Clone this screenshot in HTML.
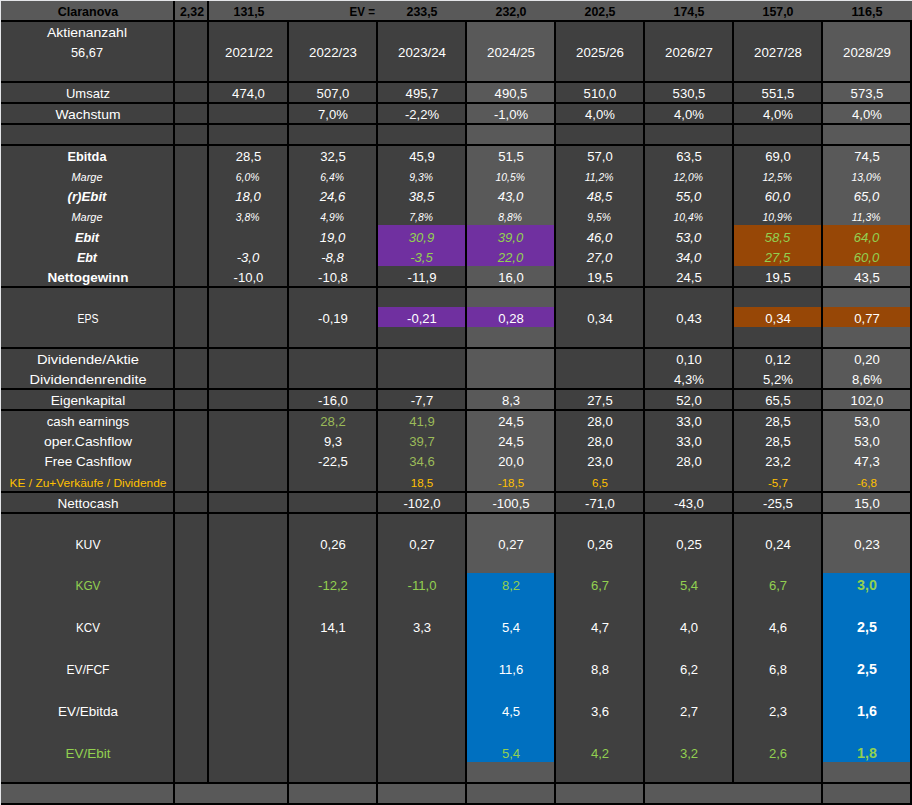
<!DOCTYPE html>
<html><head><meta charset="utf-8"><title>Claranova</title><style>
html,body{margin:0;padding:0}
body{width:912px;height:805px;overflow:hidden;background:#404040;position:relative;font-family:"Liberation Sans",sans-serif}
.r{position:absolute}
.t{position:absolute;width:200px;text-align:center;color:#fff;font-size:13.1px;line-height:20px;height:20px;margin-top:-13.6px;white-space:nowrap}
.b{font-weight:bold}.i{font-style:italic}.k{color:#000}
.s{font-size:10.4px;margin-top:-13.1px}
.B{font-size:14.3px;margin-top:-14.9px}
.y{font-size:11.6px;margin-top:-13.3px}
</style></head><body>
<div class="r" style="left:0px;top:0px;width:912px;height:1px;background:#e4e5e8"></div>
<div class="r" style="left:1px;top:1px;width:911px;height:19px;background:#595959"></div>
<div class="r" style="left:467px;top:22px;width:87px;height:760px;background:#595959"></div>
<div class="r" style="left:823px;top:22px;width:87px;height:760px;background:#595959"></div>
<div class="r" style="left:1px;top:784px;width:911px;height:19px;background:#595959"></div>
<div class="r" style="left:378px;top:225px;width:87px;height:41px;background:#7030a0"></div>
<div class="r" style="left:378px;top:307px;width:87px;height:20px;background:#7030a0"></div>
<div class="r" style="left:467px;top:225px;width:87px;height:41px;background:#7030a0"></div>
<div class="r" style="left:467px;top:307px;width:87px;height:20px;background:#7030a0"></div>
<div class="r" style="left:734px;top:225px;width:87px;height:41px;background:#974706"></div>
<div class="r" style="left:734px;top:307px;width:87px;height:20px;background:#974706"></div>
<div class="r" style="left:823px;top:225px;width:87px;height:41px;background:#974706"></div>
<div class="r" style="left:823px;top:307px;width:87px;height:20px;background:#974706"></div>
<div class="r" style="left:467px;top:573px;width:87px;height:189px;background:#0070c0"></div>
<div class="r" style="left:823px;top:573px;width:87px;height:189px;background:#0070c0"></div>
<div class="r" style="left:1px;top:20px;width:911px;height:2px;background:#000"></div>
<div class="r" style="left:1px;top:81px;width:911px;height:2px;background:#000"></div>
<div class="r" style="left:1px;top:102px;width:911px;height:2px;background:#000"></div>
<div class="r" style="left:1px;top:123px;width:911px;height:2px;background:#000"></div>
<div class="r" style="left:1px;top:144px;width:911px;height:2px;background:#000"></div>
<div class="r" style="left:1px;top:286px;width:911px;height:2px;background:#000"></div>
<div class="r" style="left:1px;top:347px;width:911px;height:2px;background:#000"></div>
<div class="r" style="left:1px;top:388px;width:911px;height:2px;background:#000"></div>
<div class="r" style="left:1px;top:409px;width:911px;height:2px;background:#000"></div>
<div class="r" style="left:1px;top:491px;width:911px;height:2px;background:#000"></div>
<div class="r" style="left:1px;top:512px;width:911px;height:2px;background:#000"></div>
<div class="r" style="left:1px;top:782px;width:911px;height:2px;background:#000"></div>
<div class="r" style="left:1px;top:803px;width:911px;height:2px;background:#000"></div>
<div class="r" style="left:173px;top:1px;width:2px;height:804px;background:#000"></div>
<div class="r" style="left:207px;top:1px;width:2px;height:782px;background:#000"></div>
<div class="r" style="left:287px;top:20px;width:2px;height:785px;background:#000"></div>
<div class="r" style="left:376px;top:20px;width:2px;height:785px;background:#000"></div>
<div class="r" style="left:465px;top:20px;width:2px;height:785px;background:#000"></div>
<div class="r" style="left:554px;top:20px;width:2px;height:785px;background:#000"></div>
<div class="r" style="left:643px;top:20px;width:2px;height:785px;background:#000"></div>
<div class="r" style="left:732px;top:20px;width:2px;height:763px;background:#000"></div>
<div class="r" style="left:821px;top:20px;width:2px;height:785px;background:#000"></div>
<div class="r" style="left:910px;top:20px;width:2px;height:785px;background:#000"></div>
<div class="r" style="left:0px;top:0px;width:1px;height:805px;background:#e6e7ea"></div>
<div class="t b k" style="transform:scaleX(0.9553);left:-12.50px;top:15.70px"><span>Claranova</span></div>
<div class="t b k" style="transform:scaleX(0.9418);left:91.50px;top:15.70px"><span>2,32</span></div>
<div class="t b k" style="transform:scaleX(0.9457);left:148.70px;top:15.70px"><span>131,5</span></div>
<div class="t b k" style="transform:scaleX(0.9457);left:322.20px;top:15.70px"><span>233,5</span></div>
<div class="t b k" style="transform:scaleX(0.9457);left:411.20px;top:15.70px"><span>232,0</span></div>
<div class="t b k" style="transform:scaleX(0.9457);left:500.20px;top:15.70px"><span>202,5</span></div>
<div class="t b k" style="transform:scaleX(0.9457);left:589.20px;top:15.70px"><span>174,5</span></div>
<div class="t b k" style="transform:scaleX(0.9457);left:678.20px;top:15.70px"><span>157,0</span></div>
<div class="t b k" style="transform:scaleX(0.9673);left:767.20px;top:15.70px"><span>116,5</span></div>
<div class="t b k" style="text-align:right;transform:scaleX(0.8865);transform-origin:100% 50%;left:175.00px;top:15.70px"><span>EV =</span></div>
<div class="t " style="transform:scaleX(1.0669);left:-13.00px;top:37.00px"><span>Aktienanzahl</span></div>
<div class="t " style="transform:scaleX(0.9762);left:-13.00px;top:57.00px"><span>56,67</span></div>
<div class="t " style="transform:scaleX(1.0139);left:148.50px;top:57.00px"><span>2021/22</span></div>
<div class="t " style="transform:scaleX(1.0139);left:233.00px;top:57.00px"><span>2022/23</span></div>
<div class="t " style="transform:scaleX(1.0139);left:322.00px;top:57.00px"><span>2023/24</span></div>
<div class="t " style="transform:scaleX(1.0139);left:411.00px;top:57.00px"><span>2024/25</span></div>
<div class="t " style="transform:scaleX(1.0139);left:500.00px;top:57.00px"><span>2025/26</span></div>
<div class="t " style="transform:scaleX(1.0139);left:589.00px;top:57.00px"><span>2026/27</span></div>
<div class="t " style="transform:scaleX(1.0139);left:678.00px;top:57.00px"><span>2027/28</span></div>
<div class="t " style="transform:scaleX(1.0139);left:767.00px;top:57.00px"><span>2028/29</span></div>
<div class="t " style="transform:scaleX(0.9912);left:-12.50px;top:98.00px"><span>Umsatz</span></div>
<div class="t " style="left:148.50px;top:98.00px"><span>474,0</span></div>
<div class="t " style="left:233.00px;top:98.00px"><span>507,0</span></div>
<div class="t " style="left:322.00px;top:98.00px"><span>495,7</span></div>
<div class="t " style="left:411.00px;top:98.00px"><span>490,5</span></div>
<div class="t " style="left:500.00px;top:98.00px"><span>510,0</span></div>
<div class="t " style="left:589.00px;top:98.00px"><span>530,5</span></div>
<div class="t " style="left:678.00px;top:98.00px"><span>551,5</span></div>
<div class="t " style="left:767.00px;top:98.00px"><span>573,5</span></div>
<div class="t " style="transform:scaleX(1.0593);left:-12.50px;top:119.00px"><span>Wachstum</span></div>
<div class="t " style="left:233.00px;top:119.00px"><span>7,0%</span></div>
<div class="t " style="left:322.00px;top:119.00px"><span>-2,2%</span></div>
<div class="t " style="left:411.00px;top:119.00px"><span>-1,0%</span></div>
<div class="t " style="left:500.00px;top:119.00px"><span>4,0%</span></div>
<div class="t " style="left:589.00px;top:119.00px"><span>4,0%</span></div>
<div class="t " style="left:678.00px;top:119.00px"><span>4,0%</span></div>
<div class="t " style="left:767.00px;top:119.00px"><span>4,0%</span></div>
<div class="t b" style="transform:scaleX(0.9746);left:-13.50px;top:161.00px"><span>Ebitda</span></div>
<div class="t " style="left:148.50px;top:161.00px"><span>28,5</span></div>
<div class="t " style="left:233.00px;top:161.00px"><span>32,5</span></div>
<div class="t " style="left:322.00px;top:161.00px"><span>45,9</span></div>
<div class="t " style="left:411.00px;top:161.00px"><span>51,5</span></div>
<div class="t " style="left:500.00px;top:161.00px"><span>57,0</span></div>
<div class="t " style="left:589.00px;top:161.00px"><span>63,5</span></div>
<div class="t " style="left:678.00px;top:161.00px"><span>69,0</span></div>
<div class="t " style="left:767.00px;top:161.00px"><span>74,5</span></div>
<div class="t i s" style="transform:scaleX(1.0525);left:-13.50px;top:180.60px"><span>Marge</span></div>
<div class="t i s" style="left:147.70px;top:180.60px"><span>6,0%</span></div>
<div class="t i s" style="left:232.20px;top:180.60px"><span>6,4%</span></div>
<div class="t i s" style="left:321.20px;top:180.60px"><span>9,3%</span></div>
<div class="t i s" style="left:410.20px;top:180.60px"><span>10,5%</span></div>
<div class="t i s" style="left:499.20px;top:180.60px"><span>11,2%</span></div>
<div class="t i s" style="left:588.20px;top:180.60px"><span>12,0%</span></div>
<div class="t i s" style="left:677.20px;top:180.60px"><span>12,5%</span></div>
<div class="t i s" style="left:766.20px;top:180.60px"><span>13,0%</span></div>
<div class="t b i" style="transform:scaleX(1.0118);left:-13.50px;top:201.00px"><span>(r)Ebit</span></div>
<div class="t i" style="left:148.00px;top:201.00px"><span>18,0</span></div>
<div class="t i" style="left:232.50px;top:201.00px"><span>24,6</span></div>
<div class="t i" style="left:321.50px;top:201.00px"><span>38,5</span></div>
<div class="t i" style="left:410.50px;top:201.00px"><span>43,0</span></div>
<div class="t i" style="left:499.50px;top:201.00px"><span>48,5</span></div>
<div class="t i" style="left:588.50px;top:201.00px"><span>55,0</span></div>
<div class="t i" style="left:677.50px;top:201.00px"><span>60,0</span></div>
<div class="t i" style="left:766.50px;top:201.00px"><span>65,0</span></div>
<div class="t i s" style="transform:scaleX(1.0525);left:-13.50px;top:220.60px"><span>Marge</span></div>
<div class="t i s" style="left:147.70px;top:220.60px"><span>3,8%</span></div>
<div class="t i s" style="left:232.20px;top:220.60px"><span>4,9%</span></div>
<div class="t i s" style="left:321.20px;top:220.60px"><span>7,8%</span></div>
<div class="t i s" style="left:410.20px;top:220.60px"><span>8,8%</span></div>
<div class="t i s" style="left:499.20px;top:220.60px"><span>9,5%</span></div>
<div class="t i s" style="left:588.20px;top:220.60px"><span>10,4%</span></div>
<div class="t i s" style="left:677.20px;top:220.60px"><span>10,9%</span></div>
<div class="t i s" style="left:766.20px;top:220.60px"><span>11,3%</span></div>
<div class="t b i" style="transform:scaleX(0.9703);left:-13.50px;top:241.50px"><span>Ebit</span></div>
<div class="t i" style="left:232.50px;top:241.50px"><span>19,0</span></div>
<div class="t i" style="color:#92d050;left:321.50px;top:241.50px"><span>30,9</span></div>
<div class="t i" style="color:#92d050;left:410.50px;top:241.50px"><span>39,0</span></div>
<div class="t i" style="left:499.50px;top:241.50px"><span>46,0</span></div>
<div class="t i" style="left:588.50px;top:241.50px"><span>53,0</span></div>
<div class="t i" style="color:#92d050;left:677.50px;top:241.50px"><span>58,5</span></div>
<div class="t i" style="color:#92d050;left:766.50px;top:241.50px"><span>64,0</span></div>
<div class="t b i" style="transform:scaleX(0.9481);left:-13.50px;top:261.50px"><span>Ebt</span></div>
<div class="t i" style="left:148.00px;top:261.50px"><span>-3,0</span></div>
<div class="t i" style="left:232.50px;top:261.50px"><span>-8,8</span></div>
<div class="t i" style="color:#92d050;left:321.50px;top:261.50px"><span>-3,5</span></div>
<div class="t i" style="color:#92d050;left:410.50px;top:261.50px"><span>22,0</span></div>
<div class="t i" style="left:499.50px;top:261.50px"><span>27,0</span></div>
<div class="t i" style="left:588.50px;top:261.50px"><span>34,0</span></div>
<div class="t i" style="color:#92d050;left:677.50px;top:261.50px"><span>27,5</span></div>
<div class="t i" style="color:#92d050;left:766.50px;top:261.50px"><span>60,0</span></div>
<div class="t b" style="transform:scaleX(1.0310);left:-12.00px;top:281.70px"><span>Nettogewinn</span></div>
<div class="t " style="left:148.50px;top:281.70px"><span>-10,0</span></div>
<div class="t " style="left:233.00px;top:281.70px"><span>-10,8</span></div>
<div class="t " style="left:322.00px;top:281.70px"><span>-11,9</span></div>
<div class="t " style="left:411.00px;top:281.70px"><span>16,0</span></div>
<div class="t " style="left:500.00px;top:281.70px"><span>19,5</span></div>
<div class="t " style="left:589.00px;top:281.70px"><span>24,5</span></div>
<div class="t " style="left:678.00px;top:281.70px"><span>19,5</span></div>
<div class="t " style="left:767.00px;top:281.70px"><span>43,5</span></div>
<div class="t " style="transform:scaleX(0.8014);left:-12.50px;top:322.40px"><span>EPS</span></div>
<div class="t " style="left:233.00px;top:322.40px"><span>-0,19</span></div>
<div class="t " style="left:322.00px;top:322.40px"><span>-0,21</span></div>
<div class="t " style="left:411.00px;top:322.40px"><span>0,28</span></div>
<div class="t " style="left:500.00px;top:322.40px"><span>0,34</span></div>
<div class="t " style="left:589.00px;top:322.40px"><span>0,43</span></div>
<div class="t " style="left:678.00px;top:322.40px"><span>0,34</span></div>
<div class="t " style="left:767.00px;top:322.40px"><span>0,77</span></div>
<div class="t " style="transform:scaleX(1.1211);left:-12.50px;top:363.70px"><span>Dividende/Aktie</span></div>
<div class="t " style="left:589.00px;top:363.70px"><span>0,10</span></div>
<div class="t " style="left:678.00px;top:363.70px"><span>0,12</span></div>
<div class="t " style="left:767.00px;top:363.70px"><span>0,20</span></div>
<div class="t " style="transform:scaleX(1.1083);left:-12.50px;top:383.70px"><span>Dividendenrendite</span></div>
<div class="t " style="left:589.00px;top:383.70px"><span>4,3%</span></div>
<div class="t " style="left:678.00px;top:383.70px"><span>5,2%</span></div>
<div class="t " style="left:767.00px;top:383.70px"><span>8,6%</span></div>
<div class="t " style="transform:scaleX(1.0442);left:-12.50px;top:404.50px"><span>Eigenkapital</span></div>
<div class="t " style="left:233.00px;top:404.50px"><span>-16,0</span></div>
<div class="t " style="left:322.00px;top:404.50px"><span>-7,7</span></div>
<div class="t " style="left:411.00px;top:404.50px"><span>8,3</span></div>
<div class="t " style="left:500.00px;top:404.50px"><span>27,5</span></div>
<div class="t " style="left:589.00px;top:404.50px"><span>52,0</span></div>
<div class="t " style="left:678.00px;top:404.50px"><span>65,5</span></div>
<div class="t " style="left:767.00px;top:404.50px"><span>102,0</span></div>
<div class="t " style="transform:scaleX(1.0119);left:-12.50px;top:425.50px"><span>cash earnings</span></div>
<div class="t " style="color:#9bbb59;left:233.00px;top:425.50px"><span>28,2</span></div>
<div class="t " style="color:#9bbb59;left:322.00px;top:425.50px"><span>41,9</span></div>
<div class="t " style="left:411.00px;top:425.50px"><span>24,5</span></div>
<div class="t " style="left:500.00px;top:425.50px"><span>28,0</span></div>
<div class="t " style="left:589.00px;top:425.50px"><span>33,0</span></div>
<div class="t " style="left:678.00px;top:425.50px"><span>28,5</span></div>
<div class="t " style="left:767.00px;top:425.50px"><span>53,0</span></div>
<div class="t " style="transform:scaleX(1.0604);left:-12.50px;top:445.50px"><span>oper.Cashflow</span></div>
<div class="t " style="left:233.00px;top:445.50px"><span>9,3</span></div>
<div class="t " style="color:#9bbb59;left:322.00px;top:445.50px"><span>39,7</span></div>
<div class="t " style="left:411.00px;top:445.50px"><span>24,5</span></div>
<div class="t " style="left:500.00px;top:445.50px"><span>28,0</span></div>
<div class="t " style="left:589.00px;top:445.50px"><span>33,0</span></div>
<div class="t " style="left:678.00px;top:445.50px"><span>28,5</span></div>
<div class="t " style="left:767.00px;top:445.50px"><span>53,0</span></div>
<div class="t " style="transform:scaleX(1.0305);left:-12.50px;top:465.50px"><span>Free Cashflow</span></div>
<div class="t " style="left:233.00px;top:465.50px"><span>-22,5</span></div>
<div class="t " style="color:#9bbb59;left:322.00px;top:465.50px"><span>34,6</span></div>
<div class="t " style="left:411.00px;top:465.50px"><span>20,0</span></div>
<div class="t " style="left:500.00px;top:465.50px"><span>23,0</span></div>
<div class="t " style="left:589.00px;top:465.50px"><span>28,0</span></div>
<div class="t " style="left:678.00px;top:465.50px"><span>23,2</span></div>
<div class="t " style="left:767.00px;top:465.50px"><span>47,3</span></div>
<div class="t y" style="color:#ffc000;transform:scaleX(1.0300);left:-12.50px;top:486.70px"><span>KE / Zu+Verkäufe / Dividende</span></div>
<div class="t y" style="color:#ffc000;left:322.00px;top:486.70px"><span>18,5</span></div>
<div class="t y" style="color:#ffc000;left:411.00px;top:486.70px"><span>-18,5</span></div>
<div class="t y" style="color:#ffc000;left:500.00px;top:486.70px"><span>6,5</span></div>
<div class="t y" style="color:#ffc000;left:678.00px;top:486.70px"><span>-5,7</span></div>
<div class="t y" style="color:#ffc000;left:767.00px;top:486.70px"><span>-6,8</span></div>
<div class="t " style="transform:scaleX(1.0344);left:-12.50px;top:507.50px"><span>Nettocash</span></div>
<div class="t " style="left:322.00px;top:507.50px"><span>-102,0</span></div>
<div class="t " style="left:411.00px;top:507.50px"><span>-100,5</span></div>
<div class="t " style="left:500.00px;top:507.50px"><span>-71,0</span></div>
<div class="t " style="left:589.00px;top:507.50px"><span>-43,0</span></div>
<div class="t " style="left:678.00px;top:507.50px"><span>-25,5</span></div>
<div class="t " style="left:767.00px;top:507.50px"><span>15,0</span></div>
<div class="t " style="transform:scaleX(0.9281);left:-12.50px;top:549.00px"><span>KUV</span></div>
<div class="t " style="left:233.00px;top:549.00px"><span>0,26</span></div>
<div class="t " style="left:322.00px;top:549.00px"><span>0,27</span></div>
<div class="t " style="left:411.00px;top:549.00px"><span>0,27</span></div>
<div class="t " style="left:500.00px;top:549.00px"><span>0,26</span></div>
<div class="t " style="left:589.00px;top:549.00px"><span>0,25</span></div>
<div class="t " style="left:678.00px;top:549.00px"><span>0,24</span></div>
<div class="t " style="left:767.00px;top:549.00px"><span>0,23</span></div>
<div class="t " style="color:#92d050;transform:scaleX(0.9040);left:-12.50px;top:589.70px"><span>KGV</span></div>
<div class="t " style="color:#92d050;left:233.00px;top:589.70px"><span>-12,2</span></div>
<div class="t " style="color:#92d050;left:322.00px;top:589.70px"><span>-11,0</span></div>
<div class="t " style="color:#92d050;left:411.00px;top:589.70px"><span>8,2</span></div>
<div class="t " style="color:#92d050;left:500.00px;top:589.70px"><span>6,7</span></div>
<div class="t " style="color:#92d050;left:589.00px;top:589.70px"><span>5,4</span></div>
<div class="t " style="color:#92d050;left:678.00px;top:589.70px"><span>6,7</span></div>
<div class="t b B" style="color:#92d050;left:767.00px;top:589.70px"><span>3,0</span></div>
<div class="t " style="transform:scaleX(0.8910);left:-12.50px;top:631.70px"><span>KCV</span></div>
<div class="t " style="left:233.00px;top:631.70px"><span>14,1</span></div>
<div class="t " style="left:322.00px;top:631.70px"><span>3,3</span></div>
<div class="t " style="left:411.00px;top:631.70px"><span>5,4</span></div>
<div class="t " style="left:500.00px;top:631.70px"><span>4,7</span></div>
<div class="t " style="left:589.00px;top:631.70px"><span>4,0</span></div>
<div class="t " style="left:678.00px;top:631.70px"><span>4,6</span></div>
<div class="t b B" style="left:767.00px;top:631.70px"><span>2,5</span></div>
<div class="t " style="transform:scaleX(0.9235);left:-12.50px;top:673.70px"><span>EV/FCF</span></div>
<div class="t " style="left:411.00px;top:673.70px"><span>11,6</span></div>
<div class="t " style="left:500.00px;top:673.70px"><span>8,8</span></div>
<div class="t " style="left:589.00px;top:673.70px"><span>6,2</span></div>
<div class="t " style="left:678.00px;top:673.70px"><span>6,8</span></div>
<div class="t b B" style="left:767.00px;top:673.70px"><span>2,5</span></div>
<div class="t " style="transform:scaleX(1.0303);left:-12.50px;top:715.70px"><span>EV/Ebitda</span></div>
<div class="t " style="left:411.00px;top:715.70px"><span>4,5</span></div>
<div class="t " style="left:500.00px;top:715.70px"><span>3,6</span></div>
<div class="t " style="left:589.00px;top:715.70px"><span>2,7</span></div>
<div class="t " style="left:678.00px;top:715.70px"><span>2,3</span></div>
<div class="t b B" style="left:767.00px;top:715.70px"><span>1,6</span></div>
<div class="t " style="color:#92d050;transform:scaleX(1.0304);left:-12.50px;top:757.50px"><span>EV/Ebit</span></div>
<div class="t " style="color:#92d050;left:411.00px;top:757.50px"><span>5,4</span></div>
<div class="t " style="color:#92d050;left:500.00px;top:757.50px"><span>4,2</span></div>
<div class="t " style="color:#92d050;left:589.00px;top:757.50px"><span>3,2</span></div>
<div class="t " style="color:#92d050;left:678.00px;top:757.50px"><span>2,6</span></div>
<div class="t b B" style="color:#92d050;left:767.00px;top:757.50px"><span>1,8</span></div>
</body></html>
